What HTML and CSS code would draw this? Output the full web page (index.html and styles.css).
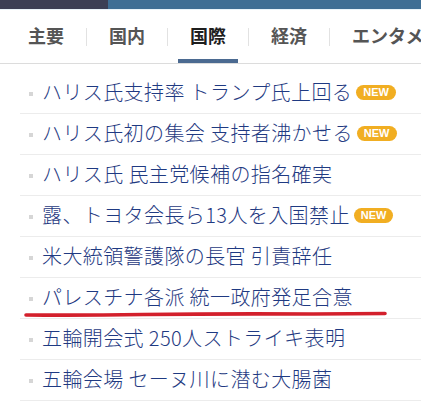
FILE: index.html
```html
<!DOCTYPE html>
<html lang="ja">
<head>
    <meta charset="UTF-8">
    <meta name="viewport" content="width=device-width, initial-scale=1.0">
    <title>国際ニュース</title>
    <link rel="stylesheet" href="styles.css">
</head>
<body>
    <div class="topbar">
        <div class="topbar-left"></div>
        <div class="topbar-right"></div>
    </div>

    <div class="tabs">
        <div class="tab"><span class="label">主要</span></div>
        <span class="sep"></span>
        <div class="tab"><span class="label">国内</span></div>
        <span class="sep"></span>
        <div class="tab active"><span class="label">国際</span></div>
        <span class="sep"></span>
        <div class="tab"><span class="label">経済</span></div>
        <span class="sep"></span>
        <div class="tab"><span class="label">エンタメ</span></div>
    </div>

    <ul class="news">
        <li><span class="dot"></span><a href="#">ハリス氏支持率 トランプ氏上回る</a><span class="new">NEW</span></li>
        <li><span class="dot"></span><a href="#">ハリス氏初の集会 支持者沸かせる</a><span class="new">NEW</span></li>
        <li><span class="dot"></span><a href="#">ハリス氏 民主党候補の指名確実</a></li>
        <li><span class="dot"></span><a href="#">露、トヨタ会長ら13人を入国禁止</a><span class="new">NEW</span></li>
        <li><span class="dot"></span><a href="#">米大統領警護隊の長官 引責辞任</a></li>
        <li class="marked">
            <span class="dot"></span><a href="#">パレスチナ各派 統一政府発足合意</a>
            <svg class="scribble" width="366" height="8" viewBox="0 0 366 8">
                <path d="M3 5 Q 60 5.5 120 4.5 Q 200 3.5 290 4 Q 330 3.5 362 3.5" fill="none" stroke="#d3202c" stroke-width="3.6" stroke-linecap="round"/>
            </svg>
        </li>
        <li><span class="dot"></span><a href="#">五輪開会式 250人ストライキ表明</a></li>
        <li><span class="dot"></span><a href="#">五輪会場 セーヌ川に潜む大腸菌</a></li>
    </ul>
</body>
</html>
```

FILE: styles.css
```css
body {
    margin: 0;
    padding: 0;
    background-color: #fff;
    font-family: "Noto Sans CJK JP", "Noto Sans", sans-serif;
    overflow: hidden;
}
.topbar {
    display: flex;
    height: 9px;
    border-bottom: 1px solid #e8f3f9;
}
.topbar-left {
    width: 108px;
    background-color: #3b3f55;
}
.topbar-right {
    flex: 1;
    background-color: #3e6e94;
}
.tabs {
    display: flex;
    align-items: center;
    height: 53px;
    padding-left: 6px;
    border-bottom: 1px solid #dcdcdc;
    white-space: nowrap;
    overflow: hidden;
}
.tab {
    height: 100%;
    padding: 0 10px;
    flex-shrink: 0;
    display: flex;
}
.label {
    display: flex;
    align-items: center;
    padding: 0 12px;
    border-bottom: 4px solid transparent;
    font-size: 18px;
    font-weight: bold;
    color: #555;
}
.tab.active .label {
    color: #1e1e1e;
    border-bottom-color: #4b6a91;
}
.sep {
    width: 1px;
    height: 18px;
    flex-shrink: 0;
    background-color: #e2e2e2;
}
.news {
    list-style: none;
    margin: 0;
    padding: 9px 0 0 0;
}
.news li {
    display: flex;
    align-items: center;
    height: 37px;
    padding-bottom: 3px;
    margin-left: 20px;
    padding-left: 9px;
    border-bottom: 1px solid #ececec;
    white-space: nowrap;
}
.news li.marked {
    position: relative;
}
.dot {
    width: 4px;
    height: 4px;
    margin-top: 4px;
    margin-right: 9px;
    background-color: #d6d6d6;
    flex-shrink: 0;
}
.news a {
    font-size: 20px;
    font-weight: 300;
    letter-spacing: 0.4px;
    color: #1f3a82;
    text-decoration: none;
}
.new {
    margin-left: 4px;
    margin-top: 2px;
    padding: 0 7px;
    height: 15px;
    line-height: 15px;
    border-radius: 8px;
    background-color: #f1ae22;
    color: #fff;
    font-family: "Liberation Sans", Arial, sans-serif;
    font-size: 11px;
    font-weight: bold;
}
.scribble {
    position: absolute;
    left: 3px;
    top: 32px;
}
```
